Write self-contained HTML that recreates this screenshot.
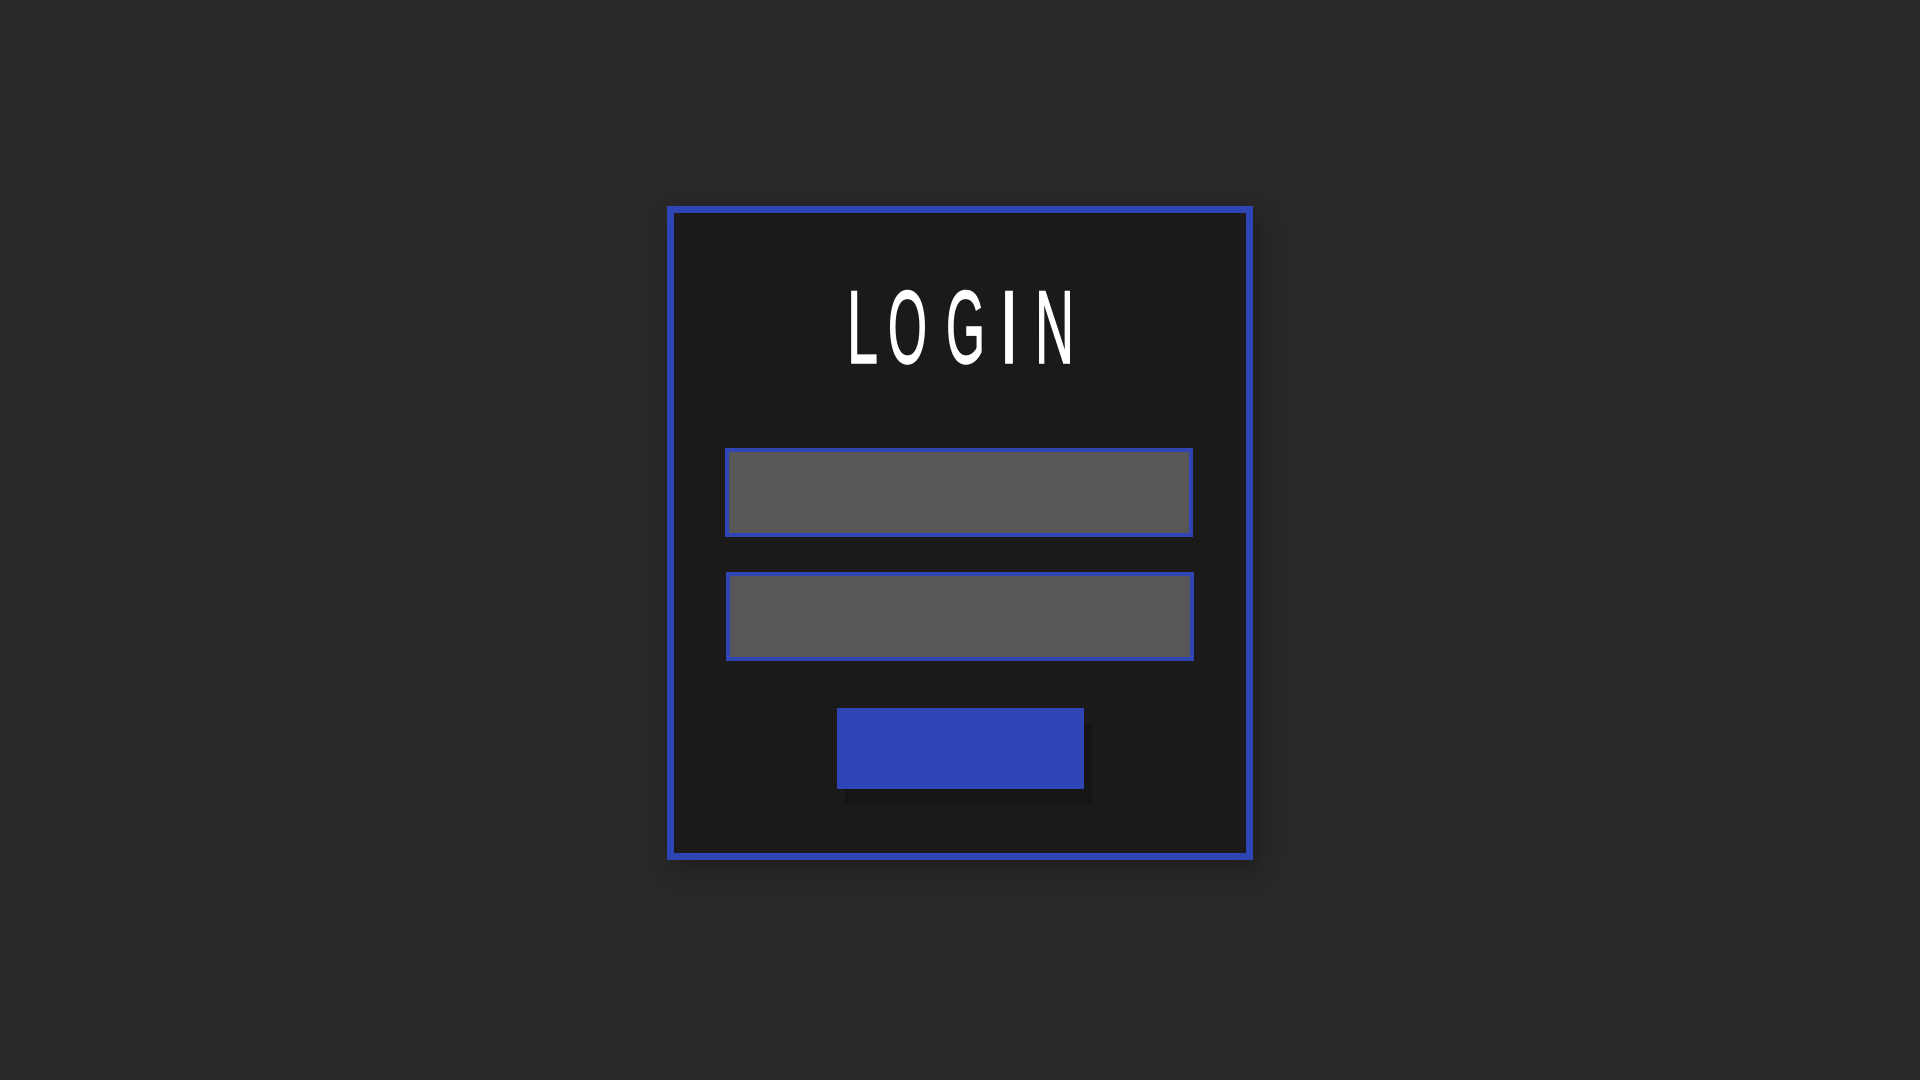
<!DOCTYPE html>
<html><head><meta charset="utf-8"><style>
html,body{margin:0;padding:0;width:1920px;height:1080px;background:#282828;overflow:hidden}
.card{position:absolute;left:667px;top:206px;width:572px;height:640px;background:#1a1a1a;border:7px solid #2f45b5;box-shadow:6px 10px 20px rgba(0,0,0,0.25)}
.inp{position:absolute;background:#575757;border:4px solid #2f45b5;box-sizing:border-box}
.btn{position:absolute;left:837px;top:708px;width:247px;height:81px;background:#2f45b5;box-shadow:8px 16px 0 #151515}
svg{position:absolute;left:0;top:0}
</style></head><body>
<div class="card"></div>
<div class="inp" style="left:725px;top:448px;width:468px;height:89px"></div>
<div class="inp" style="left:726px;top:572px;width:468px;height:89px"></div>
<div class="btn"></div>
<svg width="1920" height="1080" font-family="Liberation Sans Narrow, Liberation Sans, sans-serif" font-size="104" fill="#fff" stroke="#fff" stroke-width="1.5">
<text x="847" y="363" textLength="31" lengthAdjust="spacingAndGlyphs">L</text>
<text x="888" y="363" textLength="39" lengthAdjust="spacingAndGlyphs">O</text>
<text x="946" y="363" textLength="39" lengthAdjust="spacingAndGlyphs">G</text>
<text x="999" y="363" textLength="20" lengthAdjust="spacingAndGlyphs">I</text>
<text x="1035" y="363" textLength="39" lengthAdjust="spacingAndGlyphs">N</text>
</svg>
</body></html>
